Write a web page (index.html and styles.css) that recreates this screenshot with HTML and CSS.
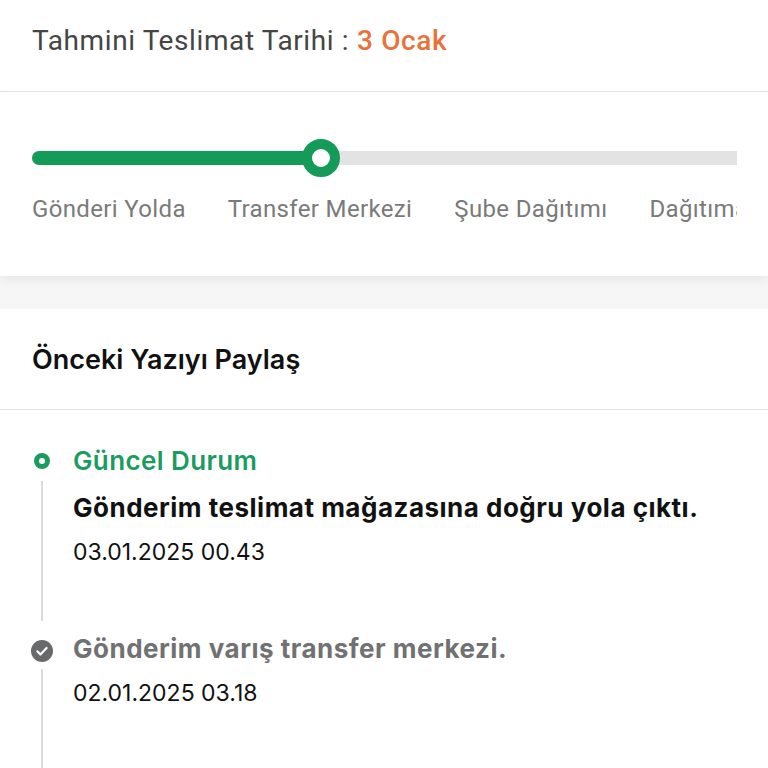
FILE: index.html
```html
<!DOCTYPE html>
<html lang="tr">
<head>
    <meta charset="UTF-8">
    <meta name="viewport" content="width=device-width, initial-scale=1.0">
    <title>Kargo Takip</title>
    <link rel="stylesheet" href="styles.css">
</head>
<body>

    <div class="delivery">
        <span class="delivery-label">Tahmini Teslimat Tarihi :</span>
        <span class="delivery-date">3 Ocak</span>
    </div>

    <div class="progress-card">
        <div class="steps">
            <div class="track">
                <div class="track-fill"></div>
                <div class="knob"></div>
            </div>
            <div class="step-labels">
                <span>Gönderi Yolda</span>
                <span>Transfer Merkezi</span>
                <span>Şube Dağıtımı</span>
                <span>Dağıtıma Çıktı</span>
            </div>
        </div>
    </div>

    <div class="history">
        <h2 class="history-title">Önceki Yazıyı Paylaş</h2>

        <div class="event current">
            <div class="marker">
                <span class="ring"></span>
                <span class="line"></span>
            </div>
            <div class="event-body">
                <div class="event-status">Güncel Durum</div>
                <div class="event-text">Gönderim teslimat mağazasına doğru yola çıktı.</div>
                <div class="event-date">03.01.2025 00.43</div>
            </div>
        </div>

        <div class="event done">
            <div class="marker">
                <svg class="check" viewBox="0 0 22 22" width="22" height="22">
                    <circle cx="11" cy="11" r="11" fill="#68696b"/>
                    <path d="M6.3 11.3l3.1 3.1 6.2-6.4" fill="none" stroke="#fff" stroke-width="2.2" stroke-linecap="round" stroke-linejoin="round"/>
                </svg>
                <span class="line"></span>
            </div>
            <div class="event-body">
                <div class="event-text muted">Gönderim varış transfer merkezi.</div>
                <div class="event-date">02.01.2025 03.18</div>
            </div>
        </div>
    </div>

</body>
</html>
```

FILE: styles.css
```css
body {
    margin: 0;
    font-family: Inter, "Noto Sans", sans-serif;
    background-color: #f6f6f6;
    color: #111;
    overflow: hidden;
}
.delivery {
    height: 81px;
    padding: 0 32px 10px;
    display: flex;
    align-items: center;
    gap: 8px;
    background-color: #fff;
    border-bottom: 1px solid #e4e4e4;
    font-family: Roboto, "Liberation Sans", sans-serif;
    font-size: 28px;
    letter-spacing: 0.6px;
}
.delivery-label {
    color: #454545;
}
.delivery-date {
    color: #e8733a;
    font-weight: 500;
}
.progress-card {
    height: 184px;
    background-color: #fff;
    box-shadow: 0 4px 10px rgba(0, 0, 0, 0.06);
}
.steps {
    margin-left: 32px;
    width: 705px;
    overflow: hidden;
    padding-top: 59px;
}
.track {
    position: relative;
    width: 900px;
    height: 14px;
    border-radius: 7px;
    background-color: #e3e3e3;
}
.track-fill {
    width: 290px;
    height: 100%;
    border-radius: 7px;
    background-color: #159b58;
}
.knob {
    position: absolute;
    left: 270px;
    top: -12px;
    width: 18px;
    height: 18px;
    border: 10px solid #159b58;
    border-radius: 50%;
    background-color: #fff;
}
.step-labels {
    display: flex;
    gap: 42px;
    margin-top: 30px;
    white-space: nowrap;
    font-family: Roboto, "Liberation Sans", sans-serif;
    font-size: 24px;
    letter-spacing: 0.35px;
    color: #7a7a7a;
}
.history {
    margin-top: 33px;
    background-color: #fff;
    min-height: 460px;
}
.history-title {
    margin: 0;
    height: 100px;
    padding: 0 32px;
    display: flex;
    align-items: center;
    border-bottom: 1px solid #e2e2e2;
    font-size: 27px;
    font-weight: 600;
    color: #111;
}
.event {
    display: grid;
    grid-template-columns: 22px 1fr;
    column-gap: 20px;
    padding: 0 32px 0 31px;
}
.event.current {
    padding-top: 34px;
}
.marker {
    display: flex;
    flex-direction: column;
    align-items: center;
}
.ring {
    width: 6px;
    height: 6px;
    margin-top: 9px;
    border: 5px solid #1b9c5f;
    border-radius: 50%;
}
.check {
    margin-top: 8px;
}
.line {
    flex: 1;
    width: 2px;
    background-color: #dcdcdc;
}
.current .line {
    margin: 12px 0 11px;
}
.done .line {
    margin-top: 7px;
}
.event-status {
    line-height: 34px;
    font-size: 26px;
    font-weight: 600;
    letter-spacing: 0.4px;
    color: #1b9c5f;
}
.event-text {
    line-height: 34px;
    margin-top: 13px;
    font-size: 26px;
    font-weight: 700;
    letter-spacing: 0.5px;
    color: #111;
}
.event-text.muted {
    margin-top: 0;
    color: #707172;
}
.event-date {
    line-height: 30px;
    margin-top: 12px;
    font-size: 23px;
    color: #111;
}
.current .event-date {
    padding-bottom: 65px;
}
.done .event-date {
    padding-bottom: 60px;
}
```
